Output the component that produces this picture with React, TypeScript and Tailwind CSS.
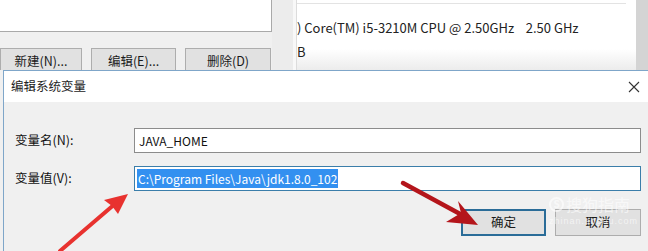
const font = "font-['Microsoft_YaHei','Noto_Sans_CJK_SC',sans-serif]";

function Btn({ label, focused = false, className = "" }: { label: string; focused?: boolean; className?: string }) {
  return (
    <div
      className={`flex items-center justify-center bg-[#e1e1e1] text-[12.5px] text-[#1a1a1a] ${
        focused ? "border-2 border-[#2a6c98]" : "border border-[#adadad]"
      } ${className}`}
    >
      {label}
    </div>
  );
}

export default function App() {
  return (
    <div className={`relative w-[648px] h-[251px] overflow-hidden bg-[#f0f0f0] ${font}`}>
      {/* background windows */}
      <div className="flex h-[70px]">
        <div className="w-[272px] flex flex-col">
          <div className="h-[34px] bg-white border-b border-r border-[#a9a9a9]" />
          <div className="flex gap-[9px] mt-[16px]">
            <Btn label="新建(N)..." className="w-[82px] h-[22px] border-b-0 pt-[3px]" />
            <Btn label="编辑(E)..." className="w-[85px] h-[22px] border-b-0 pt-[3px]" />
            <Btn label="删除(D)" className="w-[86px] h-[22px] border-b-0 pt-[3px]" />
          </div>
        </div>
        <div className="w-[25px] flex justify-end bg-[#ececec]">
          <div className="w-[4px] bg-[#f8f8f8] border-r border-[#dcdcdc]" />
        </div>
        <div className="flex-1 bg-gradient-to-b from-white from-70% to-[#ececec] pt-[3px] text-[13px] text-[#222]">
          <div className="h-px bg-[#e3e3e3] mr-[10px]" />
          <div className="mt-[15px] whitespace-pre leading-[18px]">) Core(TM) i5-3210M CPU @ 2.50GHz    2.50 GHz</div>
          <div className="mt-[6px] leading-[18px]">B</div>
        </div>
        <div className="w-[12px] bg-[#d4d4d4]" />
      </div>

      {/* dialog */}
      <div className="ml-[3px] h-[181px] border-t border-l border-[#7fa6c9] flex flex-col bg-[#f0f0f0]">
        <div className="h-[31px] bg-white flex items-center justify-between pl-[7px] pr-[7px]">
          <span className="text-[12.5px] text-[#222]">编辑系统变量</span>
          <svg width="12" height="12" viewBox="0 0 12 12" className="mr-[1px]">
            <path d="M1 1 L11 11 M11 1 L1 11" stroke="#333" strokeWidth="1.1" />
          </svg>
        </div>
        <div className="flex flex-col pl-[11px] pr-[7px] pt-[26px]">
          <div className="flex items-center">
            <span className="w-[119px] text-[12.5px] text-[#111]">变量名(N):</span>
            <div className="flex-1 h-[25px] bg-white border border-[#8c8c8c] flex items-center pl-[4px] text-[12px] text-[#111]">
              JAVA_HOME
            </div>
          </div>
          <div className="flex items-center mt-[13px]">
            <span className="w-[119px] text-[12.5px] text-[#111]">变量值(V):</span>
            <div className="flex-1 h-[25px] bg-white border border-[#3b7eaa] flex items-center pl-[2px] text-[12px]">
              <span className="bg-[#3390f0] text-white px-[1px] leading-[19px]">C:\Program Files\Java\jdk1.8.0_102</span>
            </div>
          </div>
          <div className="flex justify-end gap-[9px] mt-[18px]">
            <Btn label="确定" focused className="w-[85px] h-[27px]" />
            <Btn label="取消" className="w-[86px] h-[27px]" />
          </div>
        </div>
      </div>

      {/* watermark */}
      <div className="absolute left-[549px] top-[195px] flex flex-col items-start text-white/60 pointer-events-none">
        <div className="flex items-center gap-[2px]">
          <div className="w-[15px] h-[15px] rounded-full border-2 border-white/60 flex items-center justify-center text-[10px] font-bold leading-none">
            S
          </div>
          <span className="text-[16px] leading-[18px]">搜狗指南</span>
        </div>
        <span className="text-[9px] leading-[10px] tracking-[1px] mt-[3px] font-['Liberation_Sans',sans-serif]">zhinan.sogou.com</span>
      </div>

      {/* red arrows */}
      <svg className="absolute inset-0 pointer-events-none" width="648" height="251" viewBox="0 0 648 251">
        <path d="M60 251 L116 203" stroke="#e8322f" strokeWidth="4" strokeLinecap="round" />
        <path d="M128 194 L104 200 L112 206 L118 214 Z" fill="#e8322f" />
        <path d="M403 183 L462 215" stroke="#b4151b" strokeWidth="4.5" strokeLinecap="round" />
        <path d="M478 225 L458 201 L461 213 L446 222 Z" fill="#b4151b" />
      </svg>
    </div>
  );
}
